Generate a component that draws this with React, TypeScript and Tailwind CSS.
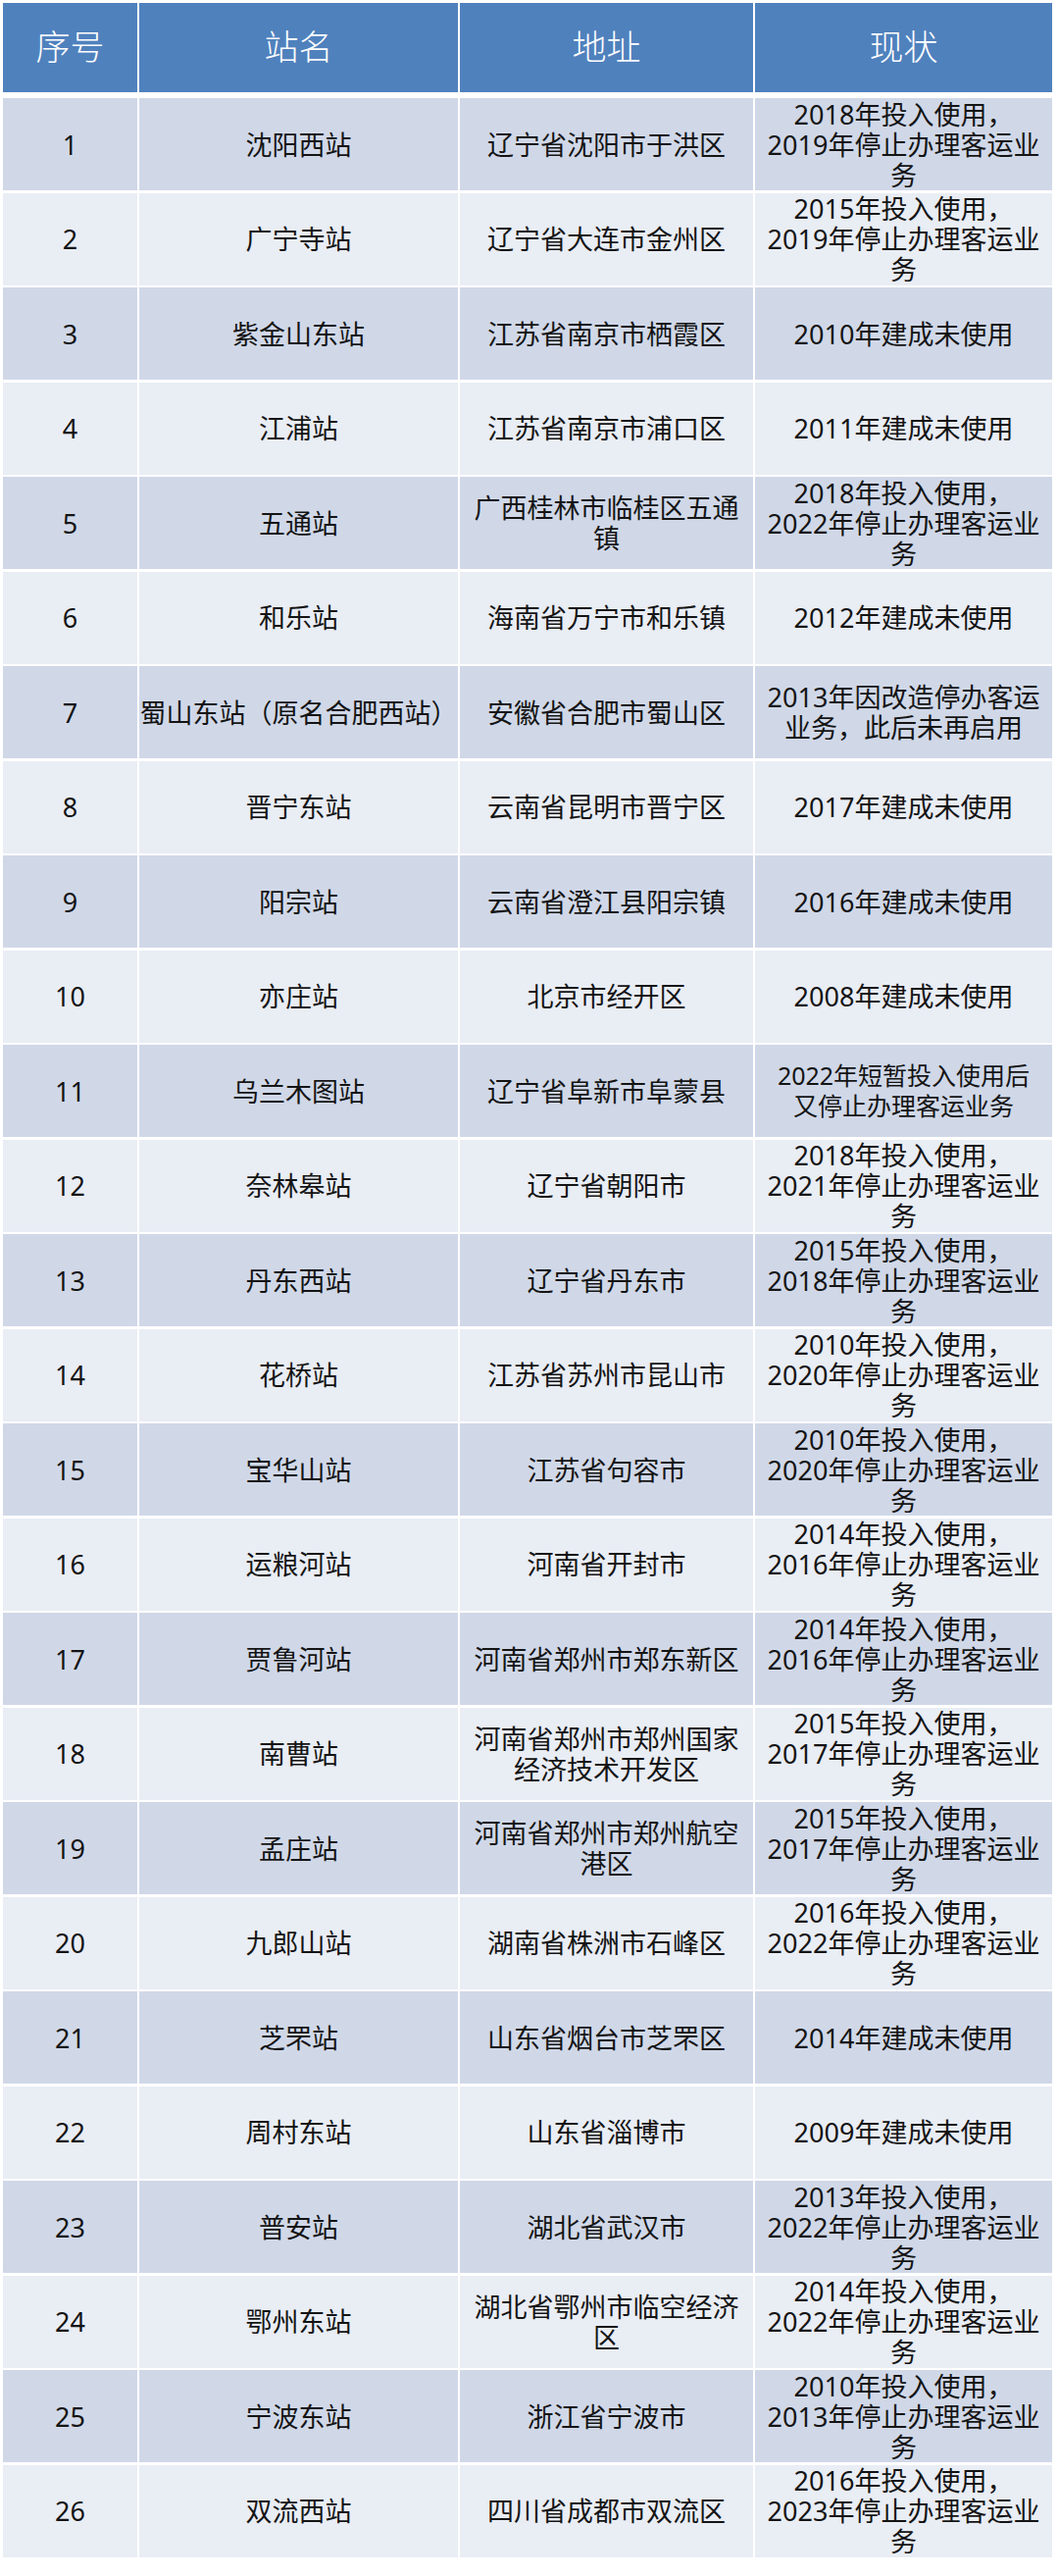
const used = (a: string, b: string) => `${a}年投入使用，\n${b}年停止办理客运业\n务`;

const rows: [string, string, string, string][] = [
  ["1", "沈阳西站", "辽宁省沈阳市于洪区", used("2018", "2019")],
  ["2", "广宁寺站", "辽宁省大连市金州区", used("2015", "2019")],
  ["3", "紫金山东站", "江苏省南京市栖霞区", "2010年建成未使用"],
  ["4", "江浦站", "江苏省南京市浦口区", "2011年建成未使用"],
  ["5", "五通站", "广西桂林市临桂区五通\n镇", used("2018", "2022")],
  ["6", "和乐站", "海南省万宁市和乐镇", "2012年建成未使用"],
  ["7", "蜀山东站（原名合肥西站）", "安徽省合肥市蜀山区", "2013年因改造停办客运\n业务，此后未再启用"],
  ["8", "晋宁东站", "云南省昆明市晋宁区", "2017年建成未使用"],
  ["9", "阳宗站", "云南省澄江县阳宗镇", "2016年建成未使用"],
  ["10", "亦庄站", "北京市经开区", "2008年建成未使用"],
  ["11", "乌兰木图站", "辽宁省阜新市阜蒙县", "2022年短暂投入使用后\n又停止办理客运业务"],
  ["12", "奈林皋站", "辽宁省朝阳市", used("2018", "2021")],
  ["13", "丹东西站", "辽宁省丹东市", used("2015", "2018")],
  ["14", "花桥站", "江苏省苏州市昆山市", used("2010", "2020")],
  ["15", "宝华山站", "江苏省句容市", used("2010", "2020")],
  ["16", "运粮河站", "河南省开封市", used("2014", "2016")],
  ["17", "贾鲁河站", "河南省郑州市郑东新区", used("2014", "2016")],
  ["18", "南曹站", "河南省郑州市郑州国家\n经济技术开发区", used("2015", "2017")],
  ["19", "孟庄站", "河南省郑州市郑州航空\n港区", used("2015", "2017")],
  ["20", "九郎山站", "湖南省株洲市石峰区", used("2016", "2022")],
  ["21", "芝罘站", "山东省烟台市芝罘区", "2014年建成未使用"],
  ["22", "周村东站", "山东省淄博市", "2009年建成未使用"],
  ["23", "普安站", "湖北省武汉市", used("2013", "2022")],
  ["24", "鄂州东站", "湖北省鄂州市临空经济\n区", used("2014", "2022")],
  ["25", "宁波东站", "浙江省宁波市", used("2010", "2013")],
  ["26", "双流西站", "四川省成都市双流区", used("2016", "2023")],
];

const cols = "grid grid-cols-[137px_325px_299px_303px] gap-x-[2px]";

export default function App() {
  return (
    <div
      className="w-[1080px] min-h-[2626px] bg-white pt-[3px] pl-[3px] text-[#141414]"
      style={{ fontFamily: '"Noto Sans", "Noto Sans CJK SC", sans-serif' }}
    >
      {/* header */}
      <div className={`${cols} h-[91px] mb-[6px]`}>
        {["序号", "站名", "地址", "现状"].map((h) => (
          <div key={h} className="flex items-center justify-center bg-[#4f81bd] text-[35px] font-light text-white">
            {h}
          </div>
        ))}
      </div>

      <div className="flex flex-col gap-y-[2.5px]">
        {rows.map((r, i) => (
          <div key={r[0]} className={`${cols} h-[94px] text-[27px] leading-[31px]`}>
            {r.map((cell, j) => (
              <div
                key={j}
                className={`flex items-center justify-center whitespace-pre-line text-center ${
                  i % 2 === 0 ? "bg-[#d0d8e8]" : "bg-[#e9edf4]"
                } ${r[0] === "11" && j === 3 ? "text-[25px] whitespace-pre" : ""}`}
              >
                {cell}
              </div>
            ))}
          </div>
        ))}
      </div>
    </div>
  );
}
